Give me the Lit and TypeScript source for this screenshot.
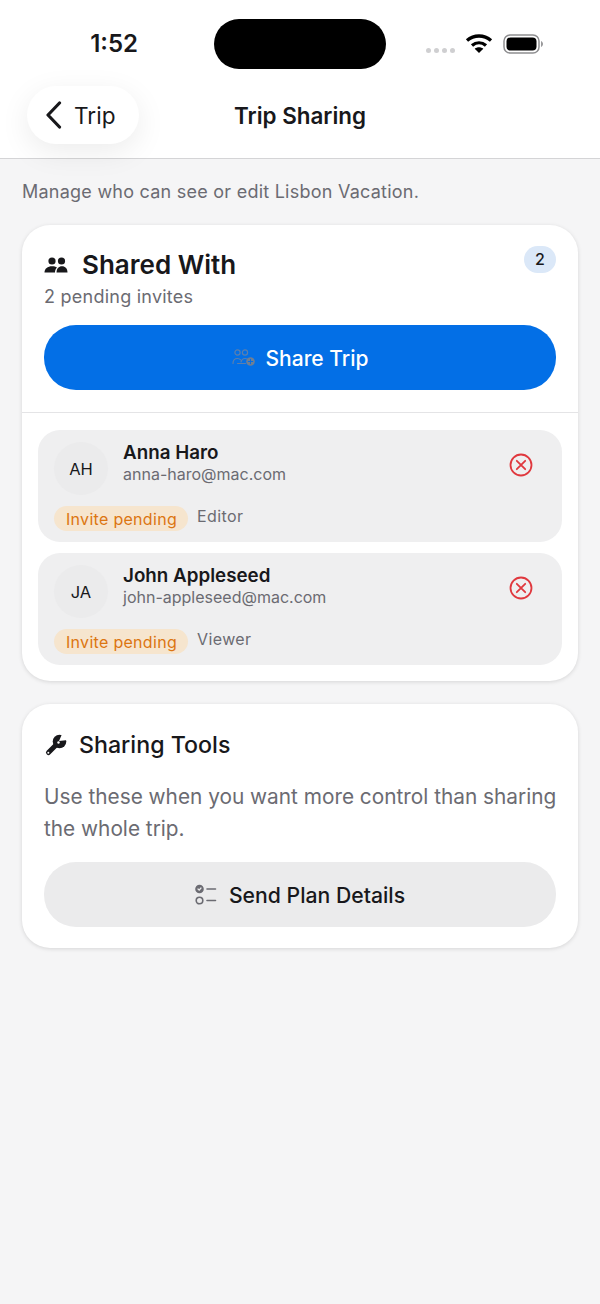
import { LitElement, html, css, svg } from 'lit';
import { customElement } from 'lit/decorators.js';

interface Invite {
  initials: string;
  name: string;
  email: string;
  role: string;
}

const INVITES: Invite[] = [
  { initials: 'AH', name: 'Anna Haro', email: 'anna-haro@mac.com', role: 'Editor' },
  { initials: 'JA', name: 'John Appleseed', email: 'john-appleseed@mac.com', role: 'Viewer' },
];

const peopleIcon = svg`<circle cx="7.5" cy="5" r="3.6"/><circle cx="17" cy="5" r="3.6"/><path d="M0 16.5c0-4 3.2-6.3 7.5-6.3 2 0 3.700.5 5 1.400-1.300 1.200-2 2.900-2 4.900z"/><path d="M12 16.500c0-4 2.200-6.300 5.500-6.300s5.500 2.300 5.500 6.300z"/>`;

@customElement('app-root')
export class AppRoot extends LitElement {
  static styles = css`
    :host {
      display: block;
      width: 600px;
      height: 1304px;
      overflow: hidden;
      background: #f5f5f6;
      color: #18181b;
      font-family: Inter, 'Liberation Sans', sans-serif;
    }
    .top {
      height: 158px;
      background: #fff;
      border-bottom: 1px solid #d4d4d6;
      display: flex;
      flex-direction: column;
    }
    .status {
      height: 86px;
      flex: none;
      display: grid;
      grid-template-columns: 214px 172px 1fr;
      padding-top: 19px;
      box-sizing: border-box;
    }
    .time {
      font-size: 24px;
      font-weight: 600;
      line-height: 50px;
      text-align: right;
      padding-right: 76px;
    }
    .island {
      height: 50px;
      border-radius: 25px;
      background: #000;
    }
    .indicators {
      display: flex;
      align-items: flex-start;
      padding-left: 40px;
    }
    .dots {
      display: flex;
      gap: 3px;
      margin-top: 29px;
    }
    .dots i {
      width: 5px;
      height: 5px;
      border-radius: 50%;
      background: #cfcfd1;
    }
    .wifi {
      margin: 14px 0 0 10px;
    }
    .battery {
      margin: 15px 0 0 10px;
    }
    .nav {
      position: relative;
      display: flex;
      justify-content: center;
      height: 58px;
      align-items: center;
    }
    .back {
      position: absolute;
      left: 27px;
      top: 0;
      width: 112px;
      height: 58px;
      border-radius: 29px;
      background: #fff;
      box-shadow: 0 8px 30px rgba(0, 0, 0, 0.08);
      display: flex;
      align-items: center;
      gap: 12px;
      padding-left: 18px;
      box-sizing: border-box;
      font-size: 22.6px;
    }
    .back span {
      padding-top: 1px;
    }
    .nav-title {
      font-size: 22.4px;
      font-weight: 600;
    }
    .content {
      padding: 21px 22px 0;
      display: flex;
      flex-direction: column;
    }
    .intro {
      margin: 0 0 21px;
      font-size: 18px;
      line-height: 24px;
      letter-spacing: 0.24px;
      color: #6b6b72;
    }
    .card {
      background: #fff;
      border-radius: 28px;
      box-shadow: 0 1px 4px rgba(0, 0, 0, 0.13);
    }
    .shared {
      height: 456px;
      box-sizing: border-box;
      padding-top: 21px;
      margin-bottom: 23px;
    }
    .shared-head {
      display: flex;
      align-items: center;
      padding: 0 22px;
      height: 36px;
    }
    .shared-head h2 {
      margin: 0 0 0 14px;
      font-size: 26px;
      font-weight: 600;
      flex: 1;
    }
    .count {
      width: 32px;
      height: 27px;
      margin: -9px 0 0;
      border-radius: 14px;
      background: #dbe8f8;
      font-size: 16px;
      font-weight: 500;
      line-height: 27px;
      text-align: center;
    }
    .pending {
      margin: 3px 22px 16px;
      font-size: 18px;
      line-height: 24px;
      letter-spacing: 0.24px;
      color: #6b6b72;
    }
    .btn {
      height: 65px;
      margin: 0 22px;
      border-radius: 32px;
      display: flex;
      align-items: center;
      justify-content: center;
      font-size: 21px;
      font-weight: 500;
    }
    .btn.primary {
      background: #036fe6;
      color: #fff;
      gap: 11px;
    }
    .btn.primary span {
      padding-top: 1px;
    }
    .btn.secondary {
      background: #ebebec;
      gap: 12px;
      font-size: 21.2px;
    }
    .divider {
      height: 1px;
      margin-top: 22px;
      background: #e4e4e6;
    }
    .rows {
      display: flex;
      flex-direction: column;
      gap: 11px;
      padding: 17px 16px 0;
    }
    .row {
      height: 112px;
      box-sizing: border-box;
      border-radius: 22px;
      background: #efeff0;
      padding: 12px 16px 0;
      display: grid;
      grid-template-columns: 54px 1fr 36px;
      grid-template-rows: 53px auto;
      column-gap: 15px;
    }
    .avatar {
      width: 54px;
      height: 53px;
      border-radius: 50%;
      background: #ebebec;
      display: flex;
      align-items: center;
      justify-content: center;
      font-size: 16.5px;
      font-weight: 400;
    }
    .who {
      margin-top: -1px;
    }
    .name {
      font-size: 18.8px;
      font-weight: 600;
      line-height: 24px;
    }
    .email {
      margin-top: -1px;
      font-size: 16px;
      line-height: 20px;
      color: #6b6b72;
    }
    .remove {
      margin: 11px 0 0 -1px;
      display: block;
    }
    .tags {
      grid-column: 1 / -1;
      display: flex;
      align-items: flex-start;
      gap: 9px;
      margin-top: 11px;
    }
    .pill {
      width: 134px;
      box-sizing: border-box;
      height: 25px;
      padding-left: 12px;
      border-radius: 13px;
      background: #f6e5ce;
      color: #dc7511;
      font-size: 16px;
      font-weight: 400;
      letter-spacing: 0.3px;
      line-height: 26px;
    }
    .role {
      font-size: 16px;
      font-weight: 400;
      letter-spacing: 0.4px;
      line-height: 20px;
      color: #6b6b72;
    }
    .tools {
      height: 244px;
      box-sizing: border-box;
      padding-top: 23px;
    }
    .tools-head {
      display: flex;
      align-items: center;
      gap: 11px;
      padding: 0 22px;
      height: 36px;
    }
    .tools-head h2 {
      margin: 0;
      font-size: 23.2px;
      font-weight: 500;
    }
    .tools p {
      margin: 18px 20px 17px 22px;
      font-size: 20.8px;
      line-height: 32px;
      color: #6b6b72;
    }
  `;

  private renderRow(invite: Invite) {
    return html`
      <div class="row">
        <div class="avatar">${invite.initials}</div>
        <div class="who">
          <div class="name">${invite.name}</div>
          <div class="email">${invite.email}</div>
        </div>
        <svg class="remove" width="24" height="24" viewBox="0 0 24 24" fill="none" stroke="#e0383e" stroke-width="1.800" stroke-linecap="round">
          <circle cx="12" cy="12" r="10.500"/>
          <path d="M7.800 7.800l8.400 8.400M16.200 7.800l-8.400 8.400"/>
        </svg>
        <div class="tags">
          <span class="pill">Invite pending</span>
          <span class="role">${invite.role}</span>
        </div>
      </div>
    `;
  }

  render() {
    return html`
      <div class="top">
        <div class="status">
          <div class="time">1:52</div>
          <div class="island"></div>
          <div class="indicators">
            <div class="dots"><i></i><i></i><i></i><i></i></div>
            <svg class="wifi" width="28" height="21" viewBox="0 0 28 21" fill="none" stroke="#000" stroke-width="3.400">
              <path d="M2 7.500c7-6 17-6 24 0"/>
              <path d="M7 12.500c4.200-3.500 9.800-3.500 14 0"/>
              <path d="M14 20l-4.300-4.300c2.500-2 6.100-2 8.600 0z" fill="#000" stroke="none"/>
            </svg>
            <svg class="battery" width="40" height="20" viewBox="0 0 40 20">
              <rect x="1" y="1" width="35" height="18" rx="6" fill="none" stroke="#8e8e90" stroke-width="1.500"/>
              <rect x="3.500" y="3.500" width="30" height="13" rx="4" fill="#000"/>
              <path d="M38 7v6c1.200-.5 2-1.700 2-3s-.8-2.500-2-3z" fill="#9a9a9c"/>
            </svg>
          </div>
        </div>
        <div class="nav">
          <div class="back">
            <svg width="17" height="28" viewBox="0 0 17 28" fill="none" stroke="#18181b" stroke-width="3.200" stroke-linecap="round" stroke-linejoin="round">
              <path d="M14.500 2L3 14l11.500 12"/>
            </svg>
            <span>Trip</span>
          </div>
          <div class="nav-title">Trip Sharing</div>
        </div>
      </div>

      <div class="content">
        <p class="intro">Manage who can see or edit Lisbon Vacation.</p>

        <section class="card shared">
          <div class="shared-head">
            <svg width="24" height="17" viewBox="0 0 23 17" fill="#18181b">${peopleIcon}</svg>
            <h2>Shared With</h2>
            <div class="count">2</div>
          </div>
          <div class="pending">2 pending invites</div>
          <div class="btn primary">
            <svg width="23" height="17" viewBox="0 0 23 17" fill="none" stroke="#5b7fae" stroke-width="1.200" stroke-linecap="round">
              <circle cx="5.500" cy="3.500" r="2.600"/>
              <circle cx="13" cy="3.500" r="2.600"/>
              <path d="M1 14.500c0-3 1.800-5 4.500-5 1.300 0 2.400.5 3.100 1.300"/>
              <path d="M5.500 14.500h8M9 13c.6-2.300 2-3.500 4-3.500 1 0 1.800.3 2.500.8"/>
              <circle cx="18.500" cy="12.500" r="4.300" fill="#6f7f94" stroke="none"/>
              <path d="M18.500 10.300v4.400M16.300 12.500h4.400" stroke="#036fe6" stroke-width="1"/>
            </svg>
            <span>Share Trip</span>
          </div>
          <div class="divider"></div>
          <div class="rows">${INVITES.map((i) => this.renderRow(i))}</div>
        </section>

        <section class="card tools">
          <div class="tools-head">
            <svg width="24" height="24" viewBox="0 0 24 24" fill="#18181b">
              <path d="M4.500 19.500L13 11" stroke="#18181b" stroke-width="5" stroke-linecap="round"/>
              <circle cx="15.500" cy="8.500" r="6.800"/>
              <path d="M15 8L18.500 0H25V7z" fill="#fff"/>
              <circle cx="4.300" cy="19.700" r="1" fill="#fff"/>
              <circle cx="14.500" cy="9.500" r="1.200" fill="#fff"/>
            </svg>
            <h2>Sharing Tools</h2>
          </div>
          <p>Use these when you want more control than sharing the whole trip.</p>
          <div class="btn secondary">
            <svg width="22" height="22" viewBox="0 0 22 22" fill="none" stroke="#6b6b72" stroke-width="1.600" stroke-linecap="round">
              <circle cx="4.500" cy="5" r="3.500" fill="#6b6b72"/>
              <path d="M3 5l1.200 1.200L6 4" stroke="#ebebec" stroke-width="1.200"/>
              <circle cx="4.500" cy="16.500" r="3.300"/>
              <path d="M12 5h8.500M12 16.500h8.500"/>
            </svg>
            <span>Send Plan Details</span>
          </div>
        </section>
      </div>
    `;
  }
}
